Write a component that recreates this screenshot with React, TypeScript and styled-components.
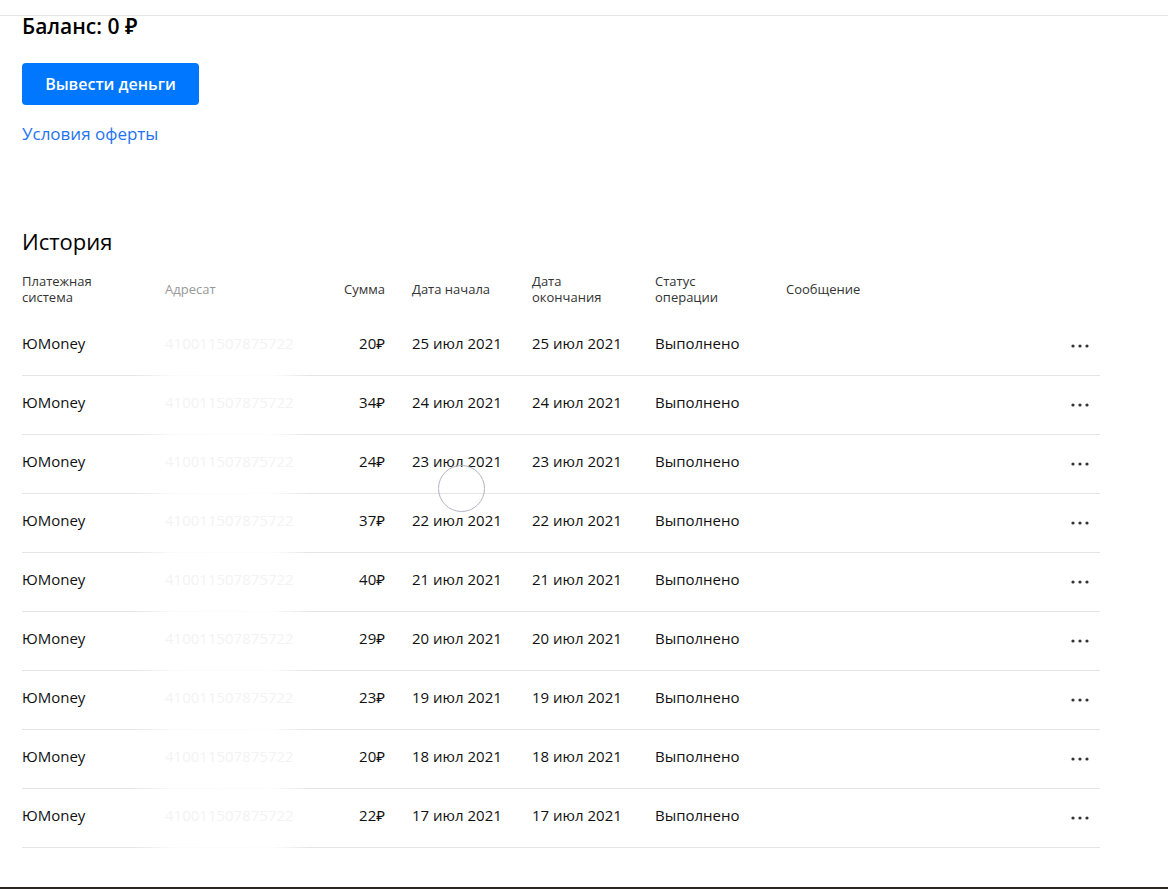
import React from 'react';
import styled, { createGlobalStyle } from 'styled-components';

const GlobalStyle = createGlobalStyle`
  html, body {
    margin: 0;
    padding: 0;
    background: #fff;
  }
  body {
    font-family: 'Open Sans', 'Noto Sans', sans-serif;
    color: #000;
    -webkit-font-smoothing: antialiased;
  }
`;

const Page = styled.div`
  position: relative;
  width: 1168px;
  min-height: 889px;
  display: flex;
  flex-direction: column;
`;

const TopBar = styled.div`
  height: 15px;
  border-bottom: 1px solid #e6e6e6;
`;

const Content = styled.main`
  padding: 0 22px;
  display: flex;
  flex-direction: column;
  flex: 1;
`;

const Balance = styled.h2`
  margin: 0;
  font-size: 21px;
  line-height: 20px;
  font-weight: 600;
`;

const WithdrawButton = styled.button`
  margin-top: 27px;
  width: 177px;
  height: 42px;
  border: none;
  border-radius: 4px;
  background: #0077ff;
  color: #fff;
  font-family: inherit;
  font-size: 16px;
  font-weight: 600;
  cursor: pointer;
`;

const OfferLink = styled.a`
  margin-top: 19px;
  align-self: flex-start;
  color: #1f74f0;
  font-size: 17px;
  line-height: 20px;
  text-decoration: none;
  cursor: pointer;
`;

const SectionTitle = styled.h3`
  margin: 83px 0 0;
  font-size: 22px;
  line-height: 28px;
  font-weight: 400;
`;

const Table = styled.div`
  width: 1078px;
  margin-top: 8px;
`;

const columns = '143px 150px 97px 120px 123px 131px 1fr 40px';

const HeaderRow = styled.div`
  display: grid;
  grid-template-columns: ${columns};
  align-items: center;
  height: 54px;
  box-sizing: border-box;
  padding-bottom: 2px;
  font-size: 13px;
  line-height: 16px;
  color: #333;
`;

const HeadCell = styled.div<{ $muted?: boolean; $right?: boolean }>`
  color: ${(p) => (p.$muted ? '#999' : '#333')};
  text-align: ${(p) => (p.$right ? 'right' : 'left')};
  padding-right: ${(p) => (p.$right ? '27px' : '0')};
`;

const Row = styled.div`
  display: grid;
  grid-template-columns: ${columns};
  align-items: center;
  height: 59px;
  box-sizing: border-box;
  padding-bottom: 7px;
  font-size: 15px;
  color: #111;
  background-image: linear-gradient(
    to right,
    #e4e4e4 0,
    #e4e4e4 110px,
    #fbfbfb 150px,
    #fdfdfd 250px,
    #e4e4e4 290px,
    #e4e4e4 100%
  );
  background-size: 100% 1px;
  background-position: bottom left;
  background-repeat: no-repeat;
`;

const Cell = styled.div<{ $right?: boolean }>`
  white-space: nowrap;
  text-align: ${(p) => (p.$right ? 'right' : 'left')};
  padding-right: ${(p) => (p.$right ? '27px' : '0')};
`;

const Hidden = styled.div`
  color: #f3f3f3;
  white-space: nowrap;
`;

const MoreButton = styled.button`
  border: none;
  background: transparent;
  padding: 0;
  margin-top: 6px;
  height: 20px;
  display: flex;
  align-items: center;
  justify-content: center;
  cursor: pointer;
`;

const BottomEdge = styled.div`
  margin-top: auto;
  height: 2px;
  background: #2a2622;
`;

const TouchRing = styled.div`
  position: absolute;
  left: 438px;
  top: 465px;
  width: 47px;
  height: 47px;
  border-radius: 50%;
  border: 1px solid #b4b4c4;
  box-sizing: border-box;
  pointer-events: none;
`;

const Dots = () => (
  <svg width="18" height="4" viewBox="0 0 18 4">
    <circle cx="2" cy="2" r="1.6" fill="#333" />
    <circle cx="9" cy="2" r="1.6" fill="#333" />
    <circle cx="16" cy="2" r="1.6" fill="#333" />
  </svg>
);

const history = [
  { sum: 20, day: 25 },
  { sum: 34, day: 24 },
  { sum: 24, day: 23 },
  { sum: 37, day: 22 },
  { sum: 40, day: 21 },
  { sum: 29, day: 20 },
  { sum: 23, day: 19 },
  { sum: 20, day: 18 },
  { sum: 22, day: 17 },
];

function App() {
  return (
    <Page>
      <GlobalStyle />
      <TopBar />
      <Content>
        <Balance>Баланс: 0 ₽</Balance>
        <WithdrawButton>Вывести деньги</WithdrawButton>
        <OfferLink>Условия оферты</OfferLink>

        <SectionTitle>История</SectionTitle>
        <Table>
          <HeaderRow>
            <HeadCell>
              Платежная
              <br />
              система
            </HeadCell>
            <HeadCell $muted>Адресат</HeadCell>
            <HeadCell $right>Сумма</HeadCell>
            <HeadCell>Дата начала</HeadCell>
            <HeadCell>
              Дата
              <br />
              окончания
            </HeadCell>
            <HeadCell>
              Статус
              <br />
              операции
            </HeadCell>
            <HeadCell>Сообщение</HeadCell>
            <HeadCell />
          </HeaderRow>
          {history.map((item, i) => (
            <Row key={i}>
              <Cell>ЮMoney</Cell>
              <Hidden>410011507875722</Hidden>
              <Cell $right>{item.sum}₽</Cell>
              <Cell>{item.day} июл 2021</Cell>
              <Cell>{item.day} июл 2021</Cell>
              <Cell>Выполнено</Cell>
              <Cell />
              <MoreButton>
                <Dots />
              </MoreButton>
            </Row>
          ))}
        </Table>
      </Content>
      <BottomEdge />
      <TouchRing />
    </Page>
  );
}

export default App;
